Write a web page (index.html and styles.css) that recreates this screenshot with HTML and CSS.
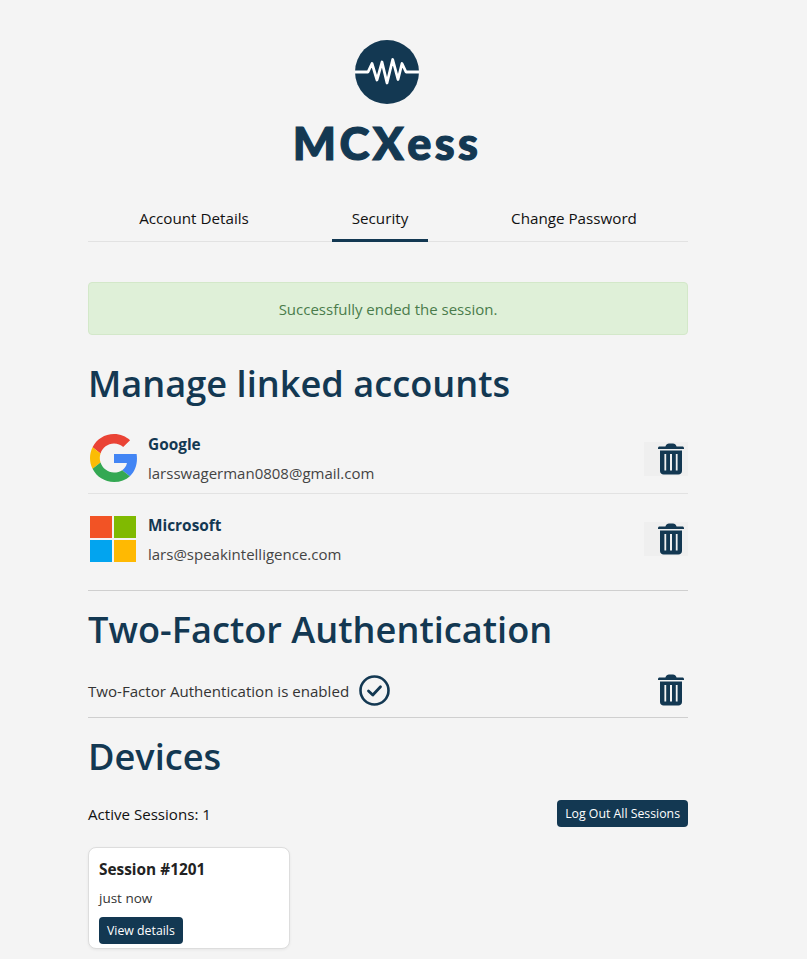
FILE: index.html
```html
<!DOCTYPE html>
<html lang="en">
<head>
    <meta charset="UTF-8">
    <meta name="viewport" content="width=device-width, initial-scale=1.0">
    <title>MCXess - Security</title>
    <link rel="stylesheet" href="styles.css">
</head>
<body>
    <svg class="icon-defs" width="0" height="0">
        <symbol id="trash" viewBox="0 0 26 32">
            <path d="M0 5.2C0 4.3.7 3.6 1.6 3.6H7.4C8 1.6 9.4 .6 11 .6H15C16.6 .6 18 1.6 18.6 3.6H24.4C25.3 3.6 26 4.3 26 5.2V6H0Z"/>
            <path fill-rule="evenodd" d="M2 7.6H24V28C24 30.2 22.4 31.6 20.4 31.6H5.6C3.6 31.6 2 30.2 2 28ZM6.4 11V27.6H8.2V11ZM12 11V27.6H14V11ZM17.8 11V27.6H19.6V11Z"/>
        </symbol>
    </svg>

    <div class="page">
        <div class="logo">
            <svg class="logo-mark" width="64" height="64" viewBox="0 0 64 64">
                <circle cx="32" cy="32" r="32" fill="#133852"/>
                <path d="M0 32H13L17 23.500L22 40L27 22L32 43L37.700 19.500L43 39.500L47 23.500L51 32H64" fill="none" stroke="#fff" stroke-width="2.800" stroke-linejoin="round"/>
            </svg>
            <div class="logo-name"><span class="logo-caps">MCX</span>ess</div>
        </div>

        <nav class="tabs">
            <a class="tab tab-account">Account Details</a>
            <a class="tab tab-security active">Security</a>
            <a class="tab tab-password">Change Password</a>
        </nav>

        <div class="alert">Successfully ended the session.</div>

        <h1 class="title-linked">Manage linked accounts</h1>

        <div class="account">
            <svg class="provider provider-google" width="48" height="48" viewBox="0 0 48 48">
                <path fill="#EA4335" d="M24 9.500c3.540 0 6.710 1.220 9.210 3.600l6.850-6.850C35.900 2.380 30.470 0 24 0 14.620 0 6.510 5.380 2.560 13.220l7.980 6.190C12.430 13.720 17.740 9.500 24 9.500z"/>
                <path fill="#4285F4" d="M46.980 24.550c0-1.570-.15-3.090-.38-4.550H24v9.020h12.940c-.58 2.960-2.260 5.480-4.780 7.180l7.730 6c4.510-4.180 7.090-10.360 7.090-17.650z"/>
                <path fill="#FBBC05" d="M10.530 28.590c-.48-1.450-.76-2.990-.76-4.590s.27-3.140.76-4.590l-7.980-6.190C.92 16.460 0 20.120 0 24c0 3.880.92 7.540 2.560 10.780l7.970-6.190z"/>
                <path fill="#34A853" d="M24 48c6.480 0 11.930-2.130 15.890-5.810l-7.730-6c-2.150 1.450-4.920 2.300-8.160 2.300-6.260 0-11.570-4.220-13.470-9.910l-7.980 6.190C6.510 42.620 14.620 48 24 48z"/>
            </svg>
            <div class="account-info">
                <div class="account-name">Google</div>
                <div class="account-mail">larsswagerman0808@gmail.com</div>
            </div>
            <button class="trash-btn"><svg width="26" height="32"><use href="#trash"/></svg></button>
        </div>

        <div class="account account-second">
            <svg class="provider" width="48" height="48" viewBox="0 0 48 48">
                <rect x="0" y="1" width="22" height="22" fill="#F25325"/>
                <rect x="24" y="1" width="22" height="22" fill="#80BA01"/>
                <rect x="0" y="25" width="22" height="22" fill="#02A4EF"/>
                <rect x="24" y="25" width="22" height="22" fill="#FFB902"/>
            </svg>
            <div class="account-info">
                <div class="account-name">Microsoft</div>
                <div class="account-mail">lars@speakintelligence.com</div>
            </div>
            <button class="trash-btn"><svg width="26" height="32"><use href="#trash"/></svg></button>
        </div>

        <h1 class="title-two-factor">Two-Factor Authentication</h1>

        <div class="two-factor">
            <span>Two-Factor Authentication is enabled</span>
            <svg class="check" width="31" height="31" viewBox="0 0 31 31">
                <circle cx="15.500" cy="15.500" r="14" fill="none" stroke="#133852" stroke-width="2.600"/>
                <path d="M9.500 16L13.800 20L21.500 11.800" fill="none" stroke="#133852" stroke-width="2.800" stroke-linecap="round" stroke-linejoin="round"/>
            </svg>
            <button class="trash-btn trash-plain"><svg width="26" height="32"><use href="#trash"/></svg></button>
        </div>

        <h1 class="title-devices">Devices</h1>

        <div class="sessions-bar">
            <span>Active Sessions: 1</span>
            <button class="btn">Log Out All Sessions</button>
        </div>

        <div class="session-card">
            <div class="session-name">Session #1201</div>
            <div class="session-time">just now</div>
            <button class="btn">View details</button>
        </div>
    </div>
</body>
</html>
```

FILE: styles.css
```css
* {
    box-sizing: border-box;
}

html, body {
    height: 959px;
    overflow: hidden;
}

body {
    margin: 0;
    background-color: #f4f4f4;
    color: #333;
    font-family: 'Open Sans', 'Noto Sans', Arial, sans-serif;
    font-size: 15px;
}

.icon-defs {
    position: absolute;
}

.page {
    width: 600px;
    margin-left: 88px;
}

.logo {
    padding-top: 40px;
    display: flex;
    flex-direction: column;
    align-items: center;
    margin-left: -2px;
}

.logo-mark {
    display: block;
}

.logo-name {
    margin-top: 13px;
    color: #133852;
    font-family: Lato, Arial, sans-serif;
    font-weight: 900;
    font-size: 45px;
    line-height: 52px;
    letter-spacing: 3.400px;
    -webkit-text-stroke: 1.200px #133852;
}

.logo-caps {
    font-size: 45.500px;
}

.tabs {
    display: flex;
    margin-top: 16px;
    height: 57px;
    border-bottom: 1px solid #e2e2e2;
}

.tab {
    color: #111;
    font-size: 15.200px;
    line-height: 20px;
    padding-top: 23px;
    text-align: center;
}

.tab-account {
    width: 244px;
    padding-right: 32px;
}

.tab-security {
    width: 96px;
}

.tab-password {
    width: 260px;
    padding-left: 32px;
}

.tab.active {
    height: 57px;
    border-bottom: 3px solid #133852;
}

.alert {
    margin-top: 40px;
    height: 53px;
    line-height: 53px;
    text-align: center;
    background-color: #dff0d8;
    border: 1px solid #d3e8c9;
    border-radius: 4px;
    color: #4a7c4b;
    font-size: 15px;
}

h1 {
    margin: 0;
    color: #133852;
    font-size: 36.200px;
    font-weight: 600;
    line-height: 48px;
}

.title-linked {
    margin-top: 24px;
}

.account {
    display: flex;
    align-items: center;
    height: 70px;
    border-bottom: 1px solid #e2e2e2;
    margin-top: 17px;
}

.account-second {
    margin-top: 0;
    height: 97px;
    padding-bottom: 6px;
    border-bottom: 1px solid #cfcfcf;
}

.provider {
    flex: none;
    margin-left: 2px;
}

.provider-google {
    margin-bottom: 2px;
}

.account-info {
    margin-left: 10px;
    padding-top: 1px;
}

.account-name {
    color: #133852;
    font-weight: 700;
    font-size: 15.400px;
    line-height: 20px;
}

.account-mail {
    margin-top: 8px;
    color: #444;
    font-size: 15px;
    line-height: 20px;
}

.trash-btn {
    margin-left: auto;
    width: 44px;
    height: 34px;
    padding: 0 4px 0 0;
    border: none;
    background-color: #efefef;
    display: flex;
    align-items: center;
    justify-content: flex-end;
    fill: #133852;
}

.trash-plain {
    background: none;
    margin-bottom: 2px;
}

.title-two-factor {
    margin-top: 14px;
}

.two-factor {
    display: flex;
    align-items: center;
    gap: 10px;
    margin-top: 13px;
    height: 52px;
    padding-bottom: 2px;
    border-bottom: 1px solid #cfcfcf;
    font-size: 15.100px;
}

.title-devices {
    margin-top: 14px;
}

.sessions-bar {
    display: flex;
    justify-content: space-between;
    align-items: center;
    margin-top: 20px;
    color: #111;
    font-size: 15.100px;
}

.btn {
    height: 27px;
    padding: 0 8px;
    border: none;
    border-radius: 4px;
    background-color: #133852;
    color: #fff;
    font-family: inherit;
    font-size: 12.300px;
}

.session-card {
    width: 202px;
    height: 102px;
    margin-top: 20px;
    padding: 12px 10px 0;
    background-color: #fff;
    border: 1px solid #ddd;
    border-radius: 8px;
    box-shadow: 0 1px 3px rgba(0, 0, 0, 0.06);
}

.session-name {
    color: #222;
    font-weight: 700;
    font-size: 15.400px;
    line-height: 20px;
}

.session-time {
    margin-top: 9px;
    font-size: 13.500px;
    line-height: 18px;
}

.session-card .btn {
    display: block;
    margin-top: 10px;
}
```
